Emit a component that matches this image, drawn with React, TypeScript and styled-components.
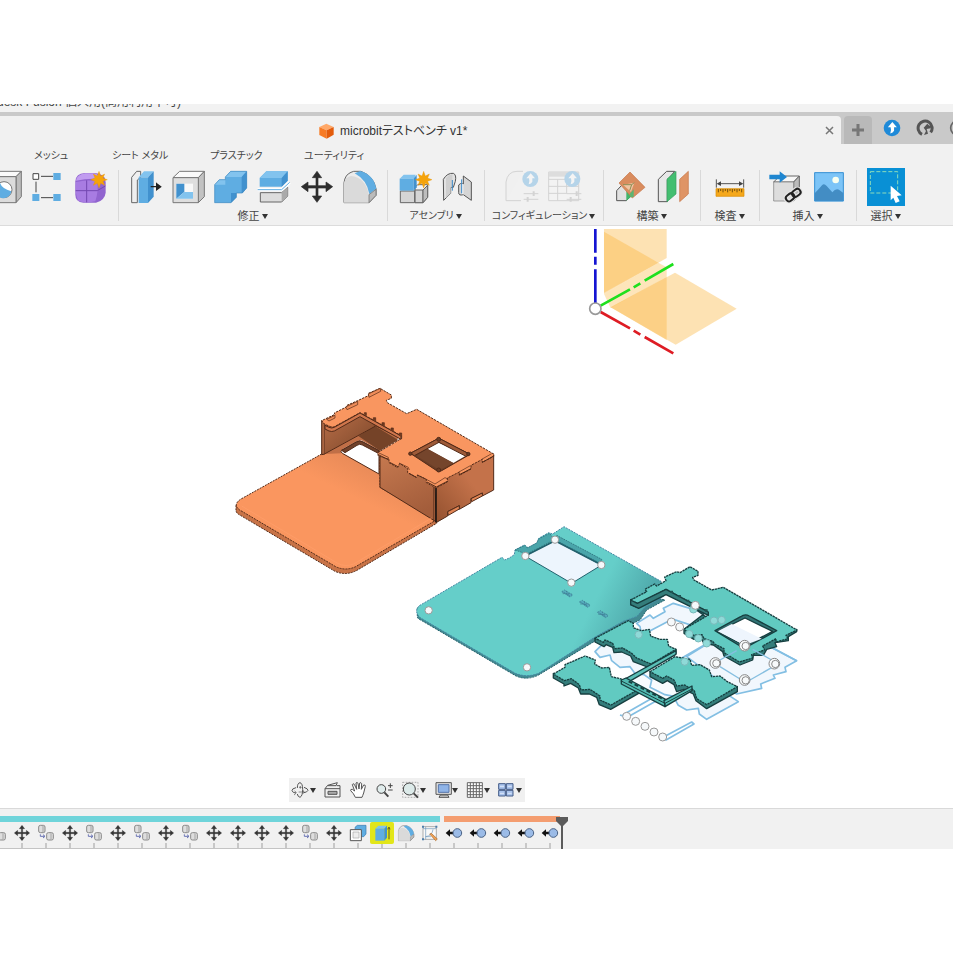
import React from "react";
import styled, { createGlobalStyle } from "styled-components";

const GlobalStyle = createGlobalStyle`
  * { box-sizing: border-box; }
  body { margin: 0; background: #fff; }
  body, button {
    font-family: "Liberation Sans", "Noto Sans CJK JP", sans-serif;
    font-feature-settings: "palt";
    font-size: 11px;
    color: #444;
  }
  button { border: 0; margin: 0; padding: 0; background: none; cursor: pointer; }
  svg { display: block; }
`;

const Page = styled.main`
  padding: 104px 0;
  overflow: hidden;
`;

const TitleStrip = styled.header`
  display: flex;
  align-items: flex-end;
  height: 8px;
  overflow: hidden;
  background: #f2f2f2;
`;

const WindowTitle = styled.div`
  display: flex;
  justify-content: flex-end;
  width: 181px;
  overflow: hidden;
  font-size: 12px;
  line-height: 20px;
  white-space: nowrap;
`;

const TabBar = styled.div`
  display: flex;
  border-top: 4px solid #c9c9c9;
  background: #c9c9c9;
  height: 32px;
`;

const DocumentTab = styled.div`
  flex: 1;
  display: flex;
  align-items: center;
  gap: 6px;
  padding: 0 6px 0 319px;
  background: #f1f1f1;
  border-radius: 0 4px 0 0;
`;

const DocumentName = styled.button`
  display: flex;
  align-items: center;
  gap: 6px;
  margin: 2px auto 0 0;
  font-size: 12px;
  line-height: 16px;
  color: #333;
  white-space: nowrap;
`;

const CloseButton = styled.button`
  display: grid;
  place-items: center;
  width: 12px;
  height: 12px;
`;

const AddTab = styled.button`
  display: grid;
  place-items: center;
  width: 28px;
  margin-left: 3px;
  background: #b9b9b9;
  border-radius: 4px 4px 0 0;
`;

const StatusIcons = styled.div`
  display: flex;
  gap: 15px;
  width: 81px;
  padding: 3px 0 0 11px;
  overflow: hidden;
`;

const StatusButton = styled.button`
  flex: none;
  width: 18px;
  height: 18px;
`;

const Ribbon = styled.section`
  background: #f1f1f1;
  border-bottom: 1px solid #dcdcdc;
`;

const MenuTabs = styled.nav`
  display: flex;
  height: 24px;
  padding-left: 34px;
`;

const MenuTab = styled.button<{ $width: number }>`
  width: ${(p) => p.$width}px;
  text-align: left;
  font-size: 10px;
  line-height: 24px;
  white-space: nowrap;
`;

const Groups = styled.div`
  display: flex;
  padding-bottom: 1px;
`;

const Group = styled.div<{ $width: number; $clipped?: boolean }>`
  flex: none;
  width: ${(p) => p.$width}px;
  display: flex;
  flex-direction: column;
  align-items: ${(p) => (p.$clipped ? "flex-end" : "center")};
  padding-right: ${(p) => (p.$clipped ? 8 : 0)}px;
  overflow: ${(p) => (p.$clipped ? "hidden" : "visible")};
  background: linear-gradient(#d9d9d9, #d9d9d9) 0 2px / ${(p) => (p.$clipped ? 0 : 1)}px 51px no-repeat;
`;

const ToolRow = styled.div`
  display: flex;
  gap: 5px;
`;

const Tool = styled.button`
  flex: none;
  width: 38px;
  height: 38px;
  &:disabled { opacity: 0.28; }
`;

const GroupLabel = styled.button<{ $small?: boolean }>`
  display: flex;
  align-items: center;
  gap: 2px;
  height: 16px;
  margin-top: 2px;
  font-size: ${(p) => (p.$small ? 10 : 11)}px;
  line-height: 16px;
  white-space: nowrap;
`;

const Canvas = styled.section`
  padding: 3px 0 6px;
  background: #fff;
`;

const ViewTools = styled.nav`
  display: flex;
  align-items: center;
  gap: 6px;
  width: fit-content;
  height: 24px;
  margin-left: 289px;
  padding: 0 3px 0 1px;
  background: #f0f0f0;
`;

const ViewTool = styled.button`
  display: flex;
  align-items: center;
`;

const Timeline = styled.footer`
  height: 41px;
  border-top: 1px solid #d9d9d9;
  background: #f1f1f1;
`;

const Tracks = styled.div`
  display: flex;
  gap: 4px;
  padding-top: 7px;
`;

const Track = styled.div<{ $color: string; $width: number }>`
  height: 6px;
  width: ${(p) => p.$width}px;
  background: ${(p) => p.$color};
`;

const History = styled.div`
  position: relative;
  width: 562px;
`;

const Features = styled.ol`
  display: flex;
  justify-content: flex-end;
  margin: 0;
  padding: 0;
  overflow: hidden;
  list-style: none;
`;

const Feature = styled.li`
  flex: none;
  width: 24px;
  height: 27px;
  border-bottom: 1px solid #c4c4c4;
  background: linear-gradient(#c8c8c8, #c8c8c8) 11px 21px / 2px 6px no-repeat;
  &:last-child {
    border-bottom: 0;
    background:
      linear-gradient(#c8c8c8, #c8c8c8) 11px 21px / 2px 6px no-repeat,
      linear-gradient(#c4c4c4, #c4c4c4) 0 26px / 12px 1px no-repeat;
  }
`;

const FeatureButton = styled.button<{ $active?: boolean }>`
  display: grid;
  place-items: center;
  width: 24px;
  height: 22px;
  background: ${(p) => (p.$active ? "#e2e619" : "none")};
  border-radius: 2px;
`;

const Playhead = styled.button`
  position: absolute;
  top: -5px;
  right: -6px;
`;

const Caret = () => (
  <svg width="6" height="5" viewBox="0 0 6 5"><path d="M0 0H6L3 5Z" fill="#333" /></svg>
);

const BLUE = "#5fade2";
const LIGHT = "#82c3ee";
const DEEP = "#4191ce";

const Star = ({ x, y }: { x: number; y: number }) => (
  <path
    transform={`translate(${x} ${y})`}
    d="M0-25L5-11L17-17L12-5L25 0L12 5L17 17L5 11L0 25L-5 11L-17 17L-12 5L-25 0L-12-5L-17-17L-5-11Z"
    fill="#f5a30a"
    stroke="#e89200"
  />
);

const Bolt = ({ x, y }: { x: number; y: number }) => (
  <g transform={`translate(${x} ${y})`}>
    <circle r="24" fill="#1f8ad8" />
    <path d="M1-17L14-2H6V8Q3 14-5 16Q-1 6-4-2H-12Z" fill="#fff" />
  </g>
);

const FilletShape = () => (
  <>
    <path d="M9 104V44Q12 20 30 13L38 10H60Q98 24 105 62V82L84 104Z" fill="#ececec" stroke="#666" strokeWidth="3" />
    <path d="M9 104V44Q14 26 30 24Q74 28 84 82V104Z" fill="#dadada" />
    <path d="M41 16L58 9Q98 20 106 62L85 78Q78 36 41 16Z" fill={BLUE} />
    <path d="M84 80V104L105 82V64Z" fill="#bbb" stroke="#666" strokeWidth="2" />
  </>
);

const icons: Record<string, React.ReactNode> = {
  hole: (
    <g stroke="#777" strokeWidth="3">
      <path d="M8 26L24 10H106L90 26Z" fill="#fafafa" />
      <path d="M90 26L106 10V86L90 104Z" fill="#bdbdbd" />
      <path d="M8 26H90V104H8Z" fill="#dcdcdc" />
      <circle cx="54" cy="65" r="24" fill="#fff" />
      <path d="M42 45Q48 62 76 70A24 24 0 1 1 42 45Z" fill={BLUE} stroke="none" />
    </g>
  ),
  pattern: (
    <>
      <path d="M36 25H72M21 41V73M36 89H72" stroke="#444" strokeWidth="3" />
      <path d="M12 17H29V34H12Z" fill="#fff" stroke="#444" strokeWidth="3" />
      <path d="M73 15H95V36H73ZM10 78H31V99H10ZM73 78H95V99H73Z" fill={BLUE} />
    </>
  ),
  form: (
    <>
      <path d="M10 40Q12 16 38 15H68Q98 16 101 42V74Q98 98 72 104H34Q10 102 10 80Z" fill="#9164cf" />
      <path d="M12 38Q14 20 40 16H65Q82 18 80 33Q45 31 12 38Z" fill="#c19cf0" />
      <path d="M12 42Q44 34 76 40Q80 70 70 100Q40 106 18 98Q8 74 12 42Z" fill="#a87ce2" />
      <path d="M44 37V103M11 68H76M78 38L98 30M76 68L100 54" stroke="#7448b0" strokeWidth="3" fill="none" />
      <Star x={81} y={35} />
    </>
  ),
  presspull: (
    <>
      <path d="M34 104H17V28L32 10H44V28L34 36Z" fill="#efefef" stroke="#666" strokeWidth="3" />
      <path d="M38 28L54 10H83L66 28Z" fill={LIGHT} />
      <path d="M38 28H66V105H38Z" fill={BLUE} />
      <path d="M66 28L83 10V86L66 105Z" fill={DEEP} />
      <path d="M74 56H96M92 47L104 56L92 65Z" stroke="#222" strokeWidth="4" fill="#222" />
    </>
  ),
  shell: (
    <g stroke="#777" strokeWidth="3">
      <path d="M12 29L32 10H106L88 29Z" fill="#fafafa" />
      <path d="M88 29L106 10V86L88 104Z" fill="#c2c2c2" />
      <path d="M12 29H88V104H12Z" fill="#dedede" />
      <path d="M22 47H72V92H22Z" fill="#f8f8f8" stroke="none" />
      <path d="M22 47H46V72L22 92Z" fill={DEEP} stroke="none" />
      <path d="M46 72H72V92H22Z" fill={LIGHT} stroke="none" />
    </g>
  ),
  combine: (
    <>
      <path d="M8 104V50L22 35H40V27L56 10H104V60L91 75H73V88L57 104Z" fill={BLUE} />
      <path d="M8 50L22 35H40V50ZM40 27L56 10H104L89 27Z" fill={LIGHT} />
      <path d="M89 27L104 10V60L91 75H89ZM57 75H73V88L57 104Z" fill={DEEP} />
      <path d="M8 104V50L22 35H40V27L56 10H104V60L91 75H73V88L57 104Z" fill="none" stroke="#3c86be" strokeWidth="2" />
    </>
  ),
  split: (
    <>
      <path d="M14 30L34 10H98V38L80 56H14Z" fill={BLUE} />
      <path d="M14 30L34 10H98L80 30Z" fill={LIGHT} />
      <path d="M80 30L98 10V38L80 56Z" fill={DEEP} />
      <path d="M16 74H80L98 58V84L80 102H16Z" fill="#ddd" stroke="#666" strokeWidth="3" />
      <path d="M80 74L98 58V84L80 102Z" fill="#aaa" />
      <path d="M8 65H80L104 43" stroke="#fff" strokeWidth="10" fill="none" />
      <path d="M8 65H80L104 43" stroke={BLUE} strokeWidth="3" fill="none" />
    </>
  ),
  move: (
    <path
      d="M57 10L71 29H60V53H84V42L104 56L84 71V60H60V84H71L57 103L43 84H54V60H30V71L10 56L30 42V53H54V29H43Z"
      fill="#2d2d2d" stroke="#2d2d2d" strokeWidth="2"
    />
  ),
  fillet: <FilletShape />,
  component: (
    <>
      <g stroke="#666" strokeWidth="3">
        <path d="M60 58L68 50H98V88L84 104H60Z" fill="#f4f4f4" />
        <path d="M60 66H84V104H60ZM16 69H59V104H16Z" fill="#d5d5d5" />
        <path d="M84 66L98 52V88L84 104Z" fill="#bdbdbd" />
      </g>
      <path d="M14 32L26 20H62L59 32Z" fill={LIGHT} />
      <path d="M14 32H56V68H14Z" fill={BLUE} />
      <path d="M56 32L65 20V58L56 68Z" fill={DEEP} />
      <Star x={86} y={35} />
    </>
  ),
  joint: (
    <g stroke="#555" strokeWidth="3">
      <path d="M16 34Q28 14 46 16Q56 20 52 40L46 58H38V76L17 97Z" fill="#e2e2e2" />
      <path d="M24 30Q32 20 43 19V58H38V76L24 90Z" fill="#cfcfcf" stroke="none" />
      <path d="M100 97L76 80Q62 84 62 74V51Q66 44 76 48V24L100 42Z" fill="#d5d5d5" />
      <path d="M70 47V76L76 80V48Z" fill="#f5f5f5" stroke="none" />
      <path d="M43 36V68M71 34V76" stroke="#3989c8" />
    </g>
  ),
  config: (
    <>
      <path d="M9 98V42Q14 10 42 10H60M9 98H54" stroke="#888" strokeWidth="3" fill="#eee" />
      <path d="M62 77H106M62 94H106" stroke="#888" strokeWidth="3" />
      <path d="M92 70V84M74 87V101" stroke="#888" strokeWidth="6" />
      <Bolt x={82} y={33} />
    </>
  ),
  table: (
    <>
      <path d="M8 12H98V98H8ZM8 34H98M8 55H98M8 76H60M35 34V98M62 34V78" stroke="#888" strokeWidth="3" fill="#fafafa" />
      <path d="M8 12H98V26H8Z" fill="#aaa" />
      <path d="M62 77H106M62 94H106" stroke="#888" strokeWidth="3" />
      <path d="M92 70V84M74 87V101" stroke="#888" strokeWidth="6" />
      <Bolt x={79} y={33} />
    </>
  ),
  plane: (
    <>
      <path d="M17 98V68L32 52L62 45V82L46 98Z" fill="#e2e2e2" stroke="#555" strokeWidth="3" />
      <path d="M46 98V70L66 52V82Z" fill="#42b66a" />
      <path d="M57 12L102 58L64 90L24 45Z" fill="#d98c5e" stroke="#c5764a" strokeWidth="2" />
      <path d="M36 50L70 44L60 72Z" fill="#efc5a3" />
      <path d="M36 50H62L70 44M62 50L56 68" stroke="#8c8c53" strokeWidth="3" fill="none" />
      <path d="M56 78L68 64V87L60 88Z" fill="#5bb573" />
    </>
  ),
  midplane: (
    <>
      <path d="M13 101V34L38 10H62L40 36V101Z" fill="#e7e7e7" stroke="#555" strokeWidth="3" />
      <path d="M39 33L66 10V78L39 101Z" fill="#43be70" stroke="#389e5e" strokeWidth="2" />
      <path d="M77 34L103 10V78L77 101Z" fill="#df9465" stroke="#c57648" strokeWidth="2" />
    </>
  ),
  measure: (
    <>
      <path d="M16 34V59M98 34V59M22 47H92" stroke="#555" strokeWidth="3" />
      <path d="M17 47L30 40V54ZM97 47L84 40V54Z" fill="#444" />
      <path d="M15 62H99V85H15Z" fill="#f5a81b" stroke="#d98b00" strokeWidth="2" />
      <path d="M22 63V73M29 63V69M36 63V73M43 63V69M50 63V73M57 63V69M64 63V73M71 63V69M78 63V73M85 63V69M92 63V73" stroke="#76510d" strokeWidth="3" />
    </>
  ),
  insert: (
    <>
      <path d="M20 42L38 24H97L80 42Z" fill="#f7f7f7" stroke="#666" strokeWidth="3" />
      <path d="M80 42L97 24V82L80 99Z" fill="#bbb" stroke="#666" strokeWidth="3" />
      <path d="M20 42H80V99H20Z" fill="#ddd" stroke="#777" strokeWidth="2" />
      <path d="M7 20H38V10L60 27L38 44V34H7Z" fill="#1f86d0" />
      <g fill="none" stroke="#e6e6e6" strokeWidth="13">
        <rect x="56" y="78" width="27" height="19" rx="9" transform="rotate(-38 70 88)" />
        <rect x="74" y="65" width="27" height="19" rx="9" transform="rotate(-38 88 74)" />
      </g>
      <g fill="none" stroke="#222" strokeWidth="6">
        <rect x="56" y="78" width="27" height="19" rx="9" transform="rotate(-38 70 88)" />
        <rect x="74" y="65" width="27" height="19" rx="9" transform="rotate(-38 88 74)" />
      </g>
    </>
  ),
  image: (
    <>
      <path d="M13 13H101V100H13Z" fill="#7cc4f7" />
      <circle cx="77" cy="36" r="10" fill="#f8fff0" />
      <path d="M14 76Q25 65 36 52Q42 45 50 54L67 73Q79 58 89 67L100 75V99H14Z" fill="#438dc4" />
      <path d="M14 14H100V99H14Z" fill="none" stroke="#3b91d2" strokeWidth="3" />
    </>
  ),
  select: (
    <>
      <path d="M0 0H114V114H0Z" fill="#0990d5" />
      <path d="M10 11H92V75H10Z" fill="none" stroke="#8edcba" strokeWidth="3" strokeDasharray="12 6" />
      <path d="M71 53L104 82L90 84L98 100L86 105L79 89L71 97Z" fill="#fff" />
    </>
  ),
};

interface ToolGroup {
  label: string;
  width: number;
  clipped?: boolean;
  disabled?: boolean;
  small?: boolean;
  tools: [string, string][];
}

const groups: ToolGroup[] = [
  { label: "", width: 118, clipped: true, tools: [["hole", "穴"], ["pattern", "パターン"], ["form", "フォームを作成"]] },
  { label: "修正", width: 269, tools: [["presspull", "プレス/プル"], ["shell", "シェル"], ["combine", "結合"], ["split", "ボディを分割"], ["move", "移動"], ["fillet", "フィレット"]] },
  { label: "アセンブリ", width: 97, small: true, tools: [["component", "新規コンポーネント"], ["joint", "ジョイント"]] },
  { label: "コンフィギュレーション", width: 119, small: true, disabled: true, tools: [["config", "コンフィギュレーション"], ["table", "コンフィギュレーション テーブル"]] },
  { label: "構築", width: 97, tools: [["plane", "オフセット平面"], ["midplane", "中立面"]] },
  { label: "検査", width: 59, tools: [["measure", "計測"]] },
  { label: "挿入", width: 97, tools: [["insert", "挿入"], ["image", "キャンバス"]] },
  { label: "選択", width: 59, tools: [["select", "選択"]] },
];

const menus: [string, number][] = [["メッシュ", 78], ["シート メタル", 98], ["プラスチック", 94], ["ユーティリティ", 80]];

const viewTools: { name: string; menu?: boolean; art: React.ReactNode }[] = [
  {
    name: "オービット", menu: true,
    art: (
      <g fill="none" stroke="#555" strokeWidth="3">
        <path d="M22 24Q22 9 30 8Q38 10 38 28Q38 48 30 52Q23 50 22 42" />
        <path d="M18 23Q5 26 6 32Q8 39 18 39M42 22Q54 26 54 31Q51 37 42 38" />
        <path d="M14 32L19 39L12 45M26 36H44M40 31V41M27 22H35M31 18V26" strokeWidth="2" />
      </g>
    ),
  },
  {
    name: "ビュー正面",
    art: (
      <g fill="none" stroke="#555" strokeWidth="3">
        <path d="M9 26H54V51H9ZM9 26L17 16L46 8L42 17H17M44 17H54V26" />
        <path d="M18 34H45V43H18Z" fill="#aaa" />
      </g>
    ),
  },
  {
    name: "画面移動",
    art: (
      <path
        d="M22 52Q17 40 8 32Q7 27 13 28L20 33L13 14Q14 9 19 13L26 28L24 9Q27 5 30 10L33 27L35 9Q39 6 41 11L40 28L47 15Q52 13 52 19L47 39Q44 47 42 52Z"
        fill="#fff" stroke="#555" strokeWidth="3"
      />
    ),
  },
  {
    name: "ズーム",
    art: (
      <g fill="none" stroke="#444" strokeWidth="3">
        <circle cx="22" cy="27" r="13" fill="#e0ecec" /><path d="M31 37L43 50" strokeWidth="6" />
        <path d="M42 17H56M49 10V24M42 30H56" />
      </g>
    ),
  },
  {
    name: "フィット", menu: true,
    art: (
      <g fill="none" stroke="#444" strokeWidth="3">
        <path d="M8 7H54V52H8Z" stroke="#888" strokeWidth="2" strokeDasharray="5 4" />
        <circle cx="28" cy="27" r="18" fill="#dceae9" /><path d="M41 40L54 53" strokeWidth="6" />
      </g>
    ),
  },
  {
    name: "表示設定", menu: true,
    art: (
      <g stroke="#555" strokeWidth="3">
        <path d="M12 8H58V43H12Z" fill="#e6e6e6" /><path d="M19 14H51V37H19Z" fill="#8fb4e8" stroke="#5674a8" />
        <path d="M25 45H47L51 52H21Z" fill="#ccc" />
      </g>
    ),
  },
  {
    name: "グリッドとスナップ", menu: true,
    art: <path d="M10 8H55V52H10ZM19 8V52M28 8V52M37 8V52M46 8V52M10 17H55M10 26H55M10 35H55M10 44H55" fill="#fff" stroke="#666" strokeWidth="3" />,
  },
  {
    name: "ビューポート", menu: true,
    art: (
      <g fill="#a9c3ec" stroke="#435b86" strokeWidth="3">
        <path d="M8 11H28V28H8ZM31 11H51V28H31ZM8 31H28V48H8ZM31 31H51V48H31Z" />
        <path d="M12 19H24M35 19H47M12 40H24M35 40H47" stroke="#f5f8ff" strokeWidth="2" />
      </g>
    ),
  },
];

const featureArt: Record<string, React.ReactNode> = {
  move: <path d="M27 4L35 14H29V25H40V19L50 27L40 35V29H29V40H35L27 50L19 40H25V29H14V35L4 27L14 19V25H25V14H19Z" fill="#333" stroke="#333" />,
  copy: (
    <g stroke="#8a8a8a" strokeWidth="3" fill="#dedede">
      <rect x="5" y="4" width="19" height="22" rx="5" />
      <rect x="29" y="26" width="20" height="22" rx="5" />
      <path d="M18 6V24M42 28V46" strokeWidth="2" />
      <path d="M10 31V37H23M18 32L24 37L18 42" stroke="#6a74b4" fill="none" />
    </g>
  ),
  sketchExtrude: (
    <>
      <path d="M18 10L25 4H51V30L44 38H20Z" fill={BLUE} stroke="#3a78aa" strokeWidth="2" />
      <path d="M4 17H37V50H4Z" fill="#fff" stroke="#555" strokeWidth="3" />
      <path d="M12 24H30V42H12Z" fill="#eee" stroke="#aaa" strokeWidth="2" />
    </>
  ),
  extrude: (
    <>
      <path d="M7 14L16 5H42L34 14Z" fill={LIGHT} /><path d="M7 14H34V50H7Z" fill={BLUE} />
      <path d="M34 14L42 5V41L34 50Z" fill={DEEP} /><path d="M48 46V12M44 16L48 9L51 16" stroke="#5c5d20" strokeWidth="3" fill="none" />
    </>
  ),
  fillet: <g transform="scale(.48)"><FilletShape /></g>,
  sketch: (
    <>
      <path d="M6 8H46V46H6Z" fill="#f9f9f9" stroke="#888" strokeWidth="2" />
      <path d="M6 14H46M14 8V46M14 38Q34 35 36 16M14 38H30" stroke="#6f97bb" strokeWidth="2" fill="none" />
      <path d="M3 5H9V11H3ZM43 5H49V11H43ZM3 43H9V49H3Z" fill="#4d7fad" />
      <path d="M26 30L31 28L49 45L44 50Z" fill="#f2a355" stroke="#a5662e" strokeWidth="2" />
    </>
  ),
  joint: (
    <>
      <path d="M2 27L15 16V23H27V31H15V38Z" fill="#111" />
      <circle cx="37" cy="27" r="13" fill="#9bbbe7" stroke="#4a6285" strokeWidth="3" />
    </>
  ),
};

const features = [
  "copy", "move", "copy", "move", "copy", "move", "copy", "move", "copy", "move", "move", "move",
  "move", "copy", "move", "sketchExtrude", "extrude", "fillet", "sketch", "joint", "joint", "joint", "joint", "joint",
];

const Points = ({ at, r = 11, faint }: { at: [number, number][]; r?: number; faint?: boolean }) => (
  <g fill={faint ? "#8fdad8" : "#f6f9fb"} stroke={faint ? "#79b9ba" : "#999"} strokeWidth="3">
    {at.map(([x, y]) => <circle key={`${x}-${y}`} cx={x} cy={y} r={r} />)}
  </g>
);

const Origin = () => (
  <g transform="translate(580 220) scale(.33333)">
    <g fill="#fbc567" fillOpacity=".5">
      <path d="M72 27H260V114L72 222Z" />
      <path d="M72 35L235 128L72 218Z" fillOpacity=".62" />
      <path d="M72 222L235 128L260 142V170L92 264Z" fillOpacity=".45" />
      <path d="M285 158L470 266L287 374L92 262Z" />
      <path d="M92 262L260 170V360Z" fillOpacity=".6" />
    </g>
    <path d="M46 20V98M46 110V134M46 148V250" stroke="#1515d2" strokeWidth="8" />
    <path d="M62 257L150 208M161 202L181 190M194 182L280 132" stroke="#1ee01e" strokeWidth="8" />
    <path d="M62 276L150 325M161 332L181 344M194 351L280 400" stroke="#de1c24" strokeWidth="8" />
    <circle cx="46" cy="266" r="17" fill="#fff" stroke="#999" strokeWidth="5" />
  </g>
);

const OrangeModel = () => (
  <g transform="translate(225 380) scale(.33333)" stroke="#512a18" strokeWidth="3" strokeLinejoin="round">
    <path d="M33 376V392Q34 400 46 406L330 574Q362 588 394 572L635 430V415L392 545L340 550Z" fill="#c87347" strokeDasharray="6 3" />
    <path d="M290 222L48 357Q22 374 44 390L332 560Q362 574 392 560L634 420L465 322V212L300 205Z" fill="url(#plate)" strokeDasharray="6 3" />
    <path d="M290 122L300 128V222L290 224Z" fill="#aa6542" />
    <path d="M300 132L405 95L530 168L465 212L412 182Q404 180 396 184L348 210V220L300 222Z" fill="#c06f47" stroke="none" />
    <path d="M300 132L415 98L450 138L300 220Z" fill="url(#wall)" stroke="none" />
    <path d="M412 105L450 138L530 178V168Z" fill="#65381f" stroke="none" />
    <path d="M450 138L400 168L465 212L520 180Z" fill="#754328" stroke="none" />
    <path d="M300 221L452 138" />
    <path d="M350 211L394 186Q404 180 414 186L462 212V282L352 220Q345 215 350 211Z" fill="#fff" />
    <path d="M350 211L394 186Q404 180 414 186L462 212V221L412 195Q404 190 396 196L360 218Z" fill="#70412a" />
    <path d="M465 215L630 305L633 425L465 322Z" fill="url(#front)" />
    <path d="M626 315V422" strokeWidth="2" />
    <path d="M633 305L780 225L806 222V330L772 348V339L738 356V368L703 388V377L668 395V408L633 428Z" fill="url(#side)" />
    <path d="M633 320V427" stroke="#111" strokeWidth="4" />
    <path d="M738 356L772 339V348L740 365ZM668 395L703 377V387L670 406Z" fill="#e18554" />
    <path
      d="M458 218L530 175V168L405 98L328 140Q320 142 312 138L298 132L290 122L330 103L328 99L364 81L366 76L398 62L432 46L430 40L465 25L499 45V55L484 61L487 68L545 101L575 88L806 222V229L772 247V238L738 256V267L703 286V276L667 294V306L633 324L604 308V298L578 285L574 292L548 278V266L524 250L518 263L492 248V238L460 228Z"
      fill="#f99660" strokeDasharray="7 3"
    />
    <path d="M300 136L312 142Q320 146 328 142L405 99L528 168V178L405 110L328 153Q320 156 312 153L300 147Z" fill="#cf764c" />
    <path d="M430 42L466 25L467 34L432 52ZM362 81L398 64V74L366 89ZM305 118L330 106V114L312 123Z" fill="#ef8c59" strokeWidth="2" />
    <path d="M460 224L490 239M494 247L519 260M552 280L574 292M606 306L634 321L667 304M703 284L738 266M772 247L806 228" fill="none" />
    <path d="M460 218L490 232V239M524 250L550 262L553 270M576 285L604 298L630 312L660 293L667 296M702 276L736 257M770 238L800 221" fill="none" strokeWidth="2" />
    <path d="M418 104V98H424V107M445 120V113H452V124M471 135V128H478V139M498 151V144H505V155M523 167V159H530V170" fill="#753b20" strokeWidth="2" />
    <path d="M556 220L635 178Q641 173 648 178L735 223L650 272Q642 277 635 272Z" fill="#6a3d26" />
    <path d="M605 205L638 187L725 226L685 249Z" fill="#fff" stroke="none" />
    <path d="M575 228L605 206L685 249L652 266L640 268Z" fill="#75452c" stroke="none" />
    <path d="M556 220L635 178Q641 173 648 178L735 223L723 229L642 187L568 227Z" fill="#9e5a38" />
    <g fill="#6a3d26"><circle cx="641" cy="178" r="6" /><circle cx="730" cy="222" r="5" /><circle cx="556" cy="221" r="5" /><circle cx="641" cy="270" r="6" /></g>
    <path d="M50 378L338 550Q362 562 386 552L620 414" stroke="#ff9f6b" strokeWidth="2" fill="none" />
  </g>
);

const TealPlate = () => (
  <g transform="translate(410 520) scale(.33333)" stroke="#23616d" strokeWidth="3" strokeLinejoin="round">
    <path d="M22 264V290Q22 296 32 300L318 468Q350 482 384 466L557 362L690 300L710 270L765 240L500 180Z" fill="#428a91" strokeDasharray="6 3" />
    <path
      d="M28 257L276 112L284 120L298 114L313 104L315 90L343 75L354 83L382 68L386 55L416 38L428 42L462 20L753 184L760 230L705 262L680 290L640 304L557 350L386 460Q350 474 316 460L32 294Q10 274 28 257Z"
      fill="url(#teal)" stroke="#4387a3" strokeDasharray="6 3"
    />
    <path d="M345 108L435 62L575 135L485 190Z" fill="#edf5fd" />
    <path d="M315 90L345 76L352 84L380 69L385 58L418 40L435 58L345 105L335 97ZM435 60L575 132V118L440 46Z" fill="#4aa5aa" strokeWidth="2" strokeDasharray="5 3" />
    <path d="M345 108L435 62L575 135" fill="none" strokeWidth="5" />
    {[[472, 221], [525, 252], [579, 283]].map(([x, y]) => (
      <path key={x} transform={`translate(${x} ${y})`} d="M-17-6L-8-11L16 4L8 10ZM-11-4L10 8M-3-8L4 8M-14 0L12 0" fill="#56adbd" stroke="#39728d" strokeWidth="2" strokeDasharray="5 3" />
    ))}
    <Points at={[[56, 271], [351, 442], [346, 108], [435, 59], [574, 135], [484, 188]]} />
  </g>
);

const TealParts = () => (
  <g transform="translate(540 560) scale(.33333)" strokeLinejoin="round">
    <path d="M290 190L330 165L372 155L410 128L500 165L430 208L545 225L430 300L300 230Z" fill="#fff" />
    <g fill="#f1f7fd" stroke="#83bfe3" strokeWidth="5">
      <path d="M165 275L190 250L405 300L595 425L500 478L478 462L475 445L440 450L415 436L405 418L370 412L330 382L350 365L312 342L290 347L270 320L240 322L215 302L210 285L180 292Z" />
      <path d="M290 190L330 165L340 175L375 155L370 145L400 130L500 160L770 302L735 322L738 335L700 345L705 355L662 372L665 385L590 402L440 290L545 225L400 178L385 184L305 226L300 200Z" />
      <path d="M415 300L545 225M540 180L770 302" fill="none" />
      <path d="M248 465L370 395M240 465L262 472L380 405M372 530L455 486L462 492L378 540Z" fill="none" />
    </g>
    <g stroke="#173f40" strokeWidth="4">
      <g fill="#347d7b">
        <path d="M40 340V354L72 372V378L92 370L115 384L122 402L148 402L170 412L178 434L212 448L305 395V382Z" />
        <path d="M165 235V246L192 260L198 254L218 262L222 278L245 276L272 288L280 305L330 324L408 280V268Z" />
        <path d="M272 120V134L292 142L375 100L500 155L432 208V220L462 238L480 230L492 250L520 255L548 275L552 288L600 315L638 300L640 286L670 286L680 268L710 260L705 248L745 242V230L770 215V208L600 245L380 85Z" />
      </g>
      <g fill="#61cac1" strokeDasharray="7 2">
        <path d="M40 342L75 322V314L135 288L166 300L164 312L185 324L208 322L214 350L240 356L305 383L213 435L180 420V408L150 388L123 390L118 374L94 356L73 362Z" />
        <path d="M165 235L265 182L280 190V203L305 212L328 208L332 228L360 238L382 238L386 258L408 268L333 312L290 294L275 280L248 264L224 266L218 250L195 240L190 247Z" />
      </g>
      <path d="M262 362L338 320L448 380L378 424Z" fill="#f7fbfe" stroke="none" />
      <path d="M290 340L312 344L335 360L330 382L375 404L405 410" fill="none" stroke="#83bfe3" strokeWidth="5" />
      <path d="M330 335V350L368 370L382 362L402 374L410 395L432 388L460 402L468 422L500 446L592 395V380Z" fill="#347d7b" />
      <g fill="#61cac1" strokeDasharray="7 2">
        <path d="M330 335L405 290L450 298L455 316L480 314L508 330L515 350L540 348L562 365L592 380L500 434L470 416L463 392L434 375L410 378L402 360L380 348L368 355Z" />
        <path
          d="M272 120L320 95L315 88L344 72L350 78L378 62L374 51L410 35L420 38L450 20L474 34V46L458 52L462 60L515 90L550 82L771 210L738 226L744 236L708 246V236L668 258L674 270L635 284L638 294L598 306L578 294L552 278V266L524 252L518 244L492 236L486 224L462 226L432 208L505 165L500 153L378 88L298 130L272 124Z"
        />
      </g>
      <path d="M272 120L292 130L378 88L505 156V166L378 104L296 145L272 134Z" fill="#347d7b" />
      <path d="M525 212L602 170Q615 160 628 168L710 212L622 260Q612 266 600 258Z" fill="#317475" />
      <path d="M533 214L615 174L698 214L614 258Z" fill="#fff" />
      <path d="M575 192L665 236L614 256L533 214Z" fill="#eef5fd" stroke="none" />
      <path d="M244 363L408 272V283L262 368Z" fill="#5bc0b8" />
      <path d="M244 360L258 354L388 424L375 440L244 372Z" fill="#52bbb2" />
      <path d="M372 422L456 378V392L375 440Z" fill="#52bbb2" />
      <path d="M244 363L375 430L458 386M375 430V440" fill="none" strokeWidth="3" />
      <path d="M266 364L375 420" fill="none" strokeDasharray="12 8" strokeWidth="6" />
      <path d="M395 92V99M419 105V112M444 119V126M471 133V140M499 148V155" stroke="#225452" strokeWidth="8" />
    </g>
    <Points faint at={[[296, 224], [434, 305], [460, 148], [522, 182], [545, 180], [448, 222], [475, 235], [500, 250]]} />
    <Points r={12} at={[[394, 186], [419, 201], [260, 469], [287, 484], [315, 499], [342, 516], [368, 531], [466, 136]]} />
    <path d="M540 320L605 360M630 360L700 320M540 300L590 272M638 268L695 300" stroke="#86bfe0" strokeWidth="4" />
    <g fill="#f8fafb" stroke="#888" strokeWidth="3">
      {[[526, 309], [703, 311], [614, 360], [614, 257]].map(([x, y]) => (
        <g key={`${x}-${y}`}><circle cx={x} cy={y} r="16" /><circle cx={x + 3} cy={y + 1} r="11" /></g>
      ))}
    </g>
  </g>
);

const Scene = () => (
  <svg width="100%" viewBox="0 229 953 549" role="img" aria-label="3D モデル">
    <defs>
      <linearGradient id="plate" x1="0" y1="1" x2=".8" y2="0"><stop offset=".65" stopColor="#fa965f" /><stop offset="1" stopColor="#dc8253" /></linearGradient>
      <linearGradient id="wall" x1="0" y1="0" x2="1" y2="1"><stop stopColor="#b96e48" /><stop offset="1" stopColor="#7a4629" /></linearGradient>
      <linearGradient id="front" x1="0" y1="0" x2=".4" y2="1"><stop stopColor="#c77a50" /><stop offset="1" stopColor="#a35d3b" /></linearGradient>
      <linearGradient id="side" x1="0" y1="1" x2="1" y2="0"><stop stopColor="#93512f" /><stop offset=".6" stopColor="#c4724a" /></linearGradient>
      <linearGradient id="teal" x1="0" y1="0" x2="1" y2=".3"><stop offset=".8" stopColor="#65cec9" /><stop offset="1" stopColor="#4fa9ab" /></linearGradient>
    </defs>
    <Origin />
    <OrangeModel />
    <TealPlate />
    <TealParts />
  </svg>
);

export default function App() {
  return (
    <Page>
      <GlobalStyle />
      <TitleStrip><WindowTitle>Autodesk Fusion 個人用(商用利用不可)</WindowTitle></TitleStrip>
      <TabBar>
        <DocumentTab>
          <DocumentName>
            <svg width="15" height="16" viewBox="0 0 45 48">
              <path d="M22 2L44 12L23 22L1 12Z" fill="#ffa868" /><path d="M1 12L23 22V47L1 36Z" fill="#f77b25" /><path d="M44 12L23 22V47L44 35Z" fill="#e35c0c" />
            </svg>
            microbitテストベンチ v1*
          </DocumentName>
          <CloseButton aria-label="閉じる">
            <svg width="9" height="9" viewBox="0 0 9 9"><path d="M1 1L8 8M8 1L1 8" stroke="#777" strokeWidth="1.5" /></svg>
          </CloseButton>
        </DocumentTab>
        <AddTab aria-label="新規タブ">
          <svg width="14" height="14" viewBox="0 0 14 14"><path d="M7 1V13M1 7H13" stroke="#777" strokeWidth="3" /></svg>
        </AddTab>
        <StatusIcons>
          <StatusButton aria-label="更新"><svg width="18" height="18" viewBox="-26 -26 52 52"><Bolt x={0} y={0} /></svg></StatusButton>
          <StatusButton aria-label="ジョブ ステータス">
            <svg width="18" height="18" viewBox="0 0 54 54">
              <path d="M18 46A21 21 0 1 1 44 40" fill="none" stroke="#555" strokeWidth="9" />
              <path d="M23 26L34 14L40 20L47 16L44 28L32 30L36 44L24 48L30 36Z" fill="#555" />
            </svg>
          </StatusButton>
          <StatusButton aria-label="通知"><svg width="18" height="18" viewBox="0 0 54 54"><circle cx="27" cy="27" r="22" fill="none" stroke="#666" strokeWidth="5" /></svg></StatusButton>
        </StatusIcons>
      </TabBar>
      <Ribbon>
        <MenuTabs>{menus.map(([name, width]) => <MenuTab key={name} $width={width}>{name}</MenuTab>)}</MenuTabs>
        <Groups>
          {groups.map((g) => (
            <Group key={g.width + g.label} $width={g.width} $clipped={g.clipped}>
              <ToolRow>
                {g.tools.map(([icon, name]) => (
                  <Tool key={icon} aria-label={name} disabled={g.disabled}>
                    <svg width="38" height="38" viewBox="0 0 114 114">{icons[icon]}</svg>
                  </Tool>
                ))}
              </ToolRow>
              {g.label && <GroupLabel $small={g.small}>{g.label}<Caret /></GroupLabel>}
            </Group>
          ))}
        </Groups>
      </Ribbon>
      <Canvas>
        <Scene />
        <ViewTools>
          {viewTools.map((t) => (
            <ViewTool key={t.name} aria-label={t.name}>
              <svg width="20" height="20" viewBox="0 0 60 60">{t.art}</svg>
              {t.menu && <Caret />}
            </ViewTool>
          ))}
        </ViewTools>
      </Canvas>
      <Timeline>
        <Tracks><Track $color="#6fd4da" $width={440} /><Track $color="#f49d70" $width={116} /></Tracks>
        <History>
          <Features>
            {features.map((f, i) => (
              <Feature key={i}>
                <FeatureButton aria-label={f} $active={f === "extrude"}>
                  <svg width="18" height="18" viewBox="0 0 54 54">{featureArt[f]}</svg>
                </FeatureButton>
              </Feature>
            ))}
          </Features>
          <Playhead aria-label="タイムライン マーカー">
            <svg width="12" height="32" viewBox="0 0 12 32"><path d="M0 0H12V4L7 9V32H5V9L0 4Z" fill="#5b5b5b" /></svg>
          </Playhead>
        </History>
      </Timeline>
    </Page>
  );
}
